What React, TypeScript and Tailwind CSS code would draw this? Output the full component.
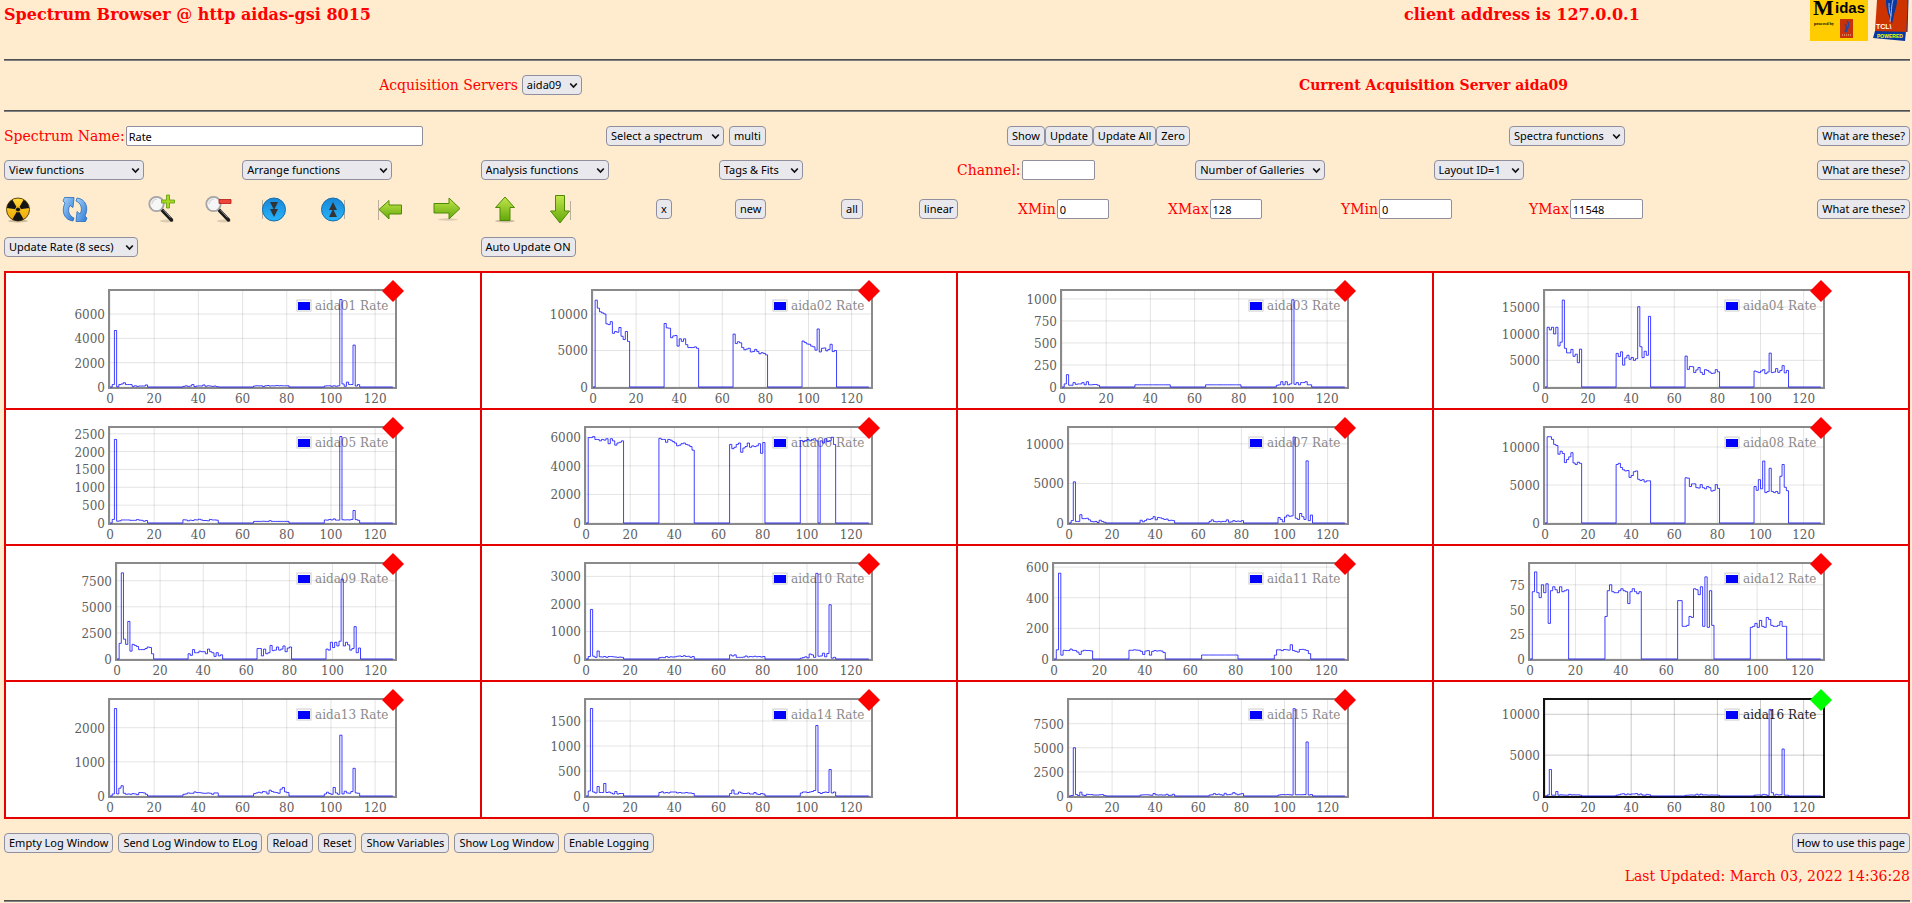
import type { ReactNode } from "react";

type Gallery = {
  name: string;
  left: number;
  height: number;
  max: number;
  ticks: number[];
  // counts for the four groups of 16 channels, starting at 1, 33, 65 and 97
  groups: number[][];
  active?: boolean;
};

const flat = (value: number) => Array.from({ length: 16 }, () => value);

const galleries: Gallery[] = [
  {
    name: "aida01", left: 47, height: 135, max: 7900, ticks: [0, 2000, 4000, 6000],
    groups: [
      [200, 4650, 20, 200, 250, 350, 200, 200, 200, 50, 100, 50, 80, 80, 80, 170],
      [50, 100, 50, 80, 200, 30, 80, 90, 80, 170, 60, 100, 80, 50, 80, 30],
      [80, 100, 90, 100, 40, 100, 120, 80, 100, 90, 120, 100, 110, 100, 100, 100],
      [80, 100, 100, 60, 100, 60, 100, 7200, 250, 60, 400, 200, 200, 3450, 80, 200],
    ],
  },
  {
    name: "aida02", left: 54, height: 135, max: 13150, ticks: [0, 5000, 10000],
    groups: [
      [11900, 10800, 10300, 10150, 10000, 8650, 8550, 8950, 7350, 7600, 7500, 8150, 6950, 6500, 7600, 6250],
      [8700, 8100, 8050, 6750, 7000, 7050, 5600, 6600, 6250, 6600, 5800, 5400, 5400, 5400, 5500, 5300],
      [7250, 5950, 6200, 6050, 5400, 5100, 5200, 5300, 4800, 4850, 5150, 4850, 4550, 4700, 4600, 4400],
      [6300, 6100, 5900, 5850, 5600, 5500, 5050, 7950, 4800, 5300, 5350, 4950, 5150, 5850, 4850, 5000],
    ],
  },
  {
    name: "aida03", left: 47, height: 135, max: 1090, ticks: [0, 250, 500, 750, 1000],
    groups: [
      [35, 140, 20, 20, 50, 30, 35, 35, 50, 25, 60, 25, 25, 28, 28, 20],
      flat(25),
      flat(25),
      [20, 25, 60, 25, 60, 25, 35, 990, 30, 50, 25, 50, 50, 60, 25, 25],
    ],
  },
  {
    name: "aida04", left: 54, height: 135, max: 18000, ticks: [0, 5000, 10000, 15000],
    groups: [
      [11200, 10700, 11200, 9950, 11200, 7700, 8400, 16300, 7250, 6400, 6400, 7050, 5750, 6150, 4550, 7100],
      [6300, 5700, 6600, 4100, 5450, 5950, 5200, 5550, 5000, 5300, 15050, 7550, 5500, 6700, 5950, 13250],
      [5800, 3300, 3850, 3800, 2700, 3200, 3650, 2750, 2350, 3250, 3100, 2800, 2550, 2600, 3250, 2850],
      [3000, 2850, 2700, 3000, 3250, 2500, 2800, 6350, 2700, 2800, 3450, 2750, 3100, 4000, 2650, 3100],
    ],
  },
  {
    name: "aida05", left: 47, height: 134, max: 2660, ticks: [0, 500, 1000, 1500, 2000, 2500],
    groups: [
      [100, 2340, 50, 60, 85, 85, 85, 85, 75, 75, 75, 95, 80, 75, 50, 70],
      [90, 85, 60, 80, 70, 90, 85, 105, 85, 70, 70, 60, 100, 85, 85, 80],
      [45, 45, 45, 45, 50, 45, 45, 65, 45, 45, 45, 45, 45, 45, 45, 45],
      [85, 80, 100, 85, 115, 80, 80, 2420, 90, 85, 90, 85, 100, 350, 95, 75],
    ],
  },
  {
    name: "aida06", left: 47, height: 134, max: 6650, ticks: [0, 2000, 4000, 6000],
    groups: [
      [5980, 5980, 6050, 5850, 5850, 5750, 5850, 5800, 5900, 5550, 5900, 5750, 5450, 5600, 5650, 5750],
      [5930, 5850, 5850, 5650, 5850, 5800, 5700, 5600, 5400, 5450, 5550, 5600, 5500, 5450, 5350, 5100],
      [5500, 5200, 5300, 5500, 5600, 4950, 5250, 5350, 5600, 5300, 5400, 5350, 5400, 5550, 4880, 5630],
      [5780, 5700, 5750, 5850, 5750, 5850, 5900, 5750, 0, 5750, 5600, 5900, 5700, 5750, 6000, 5500],
    ],
  },
  {
    name: "aida07", left: 54, height: 134, max: 12000, ticks: [0, 5000, 10000],
    groups: [
      [300, 5200, 200, 200, 1050, 550, 550, 600, 400, 200, 150, 200, 60, 350, 200, 100],
      [350, 150, 300, 500, 450, 550, 800, 400, 700, 650, 550, 450, 500, 300, 350, 300],
      [200, 400, 200, 150, 200, 150, 200, 200, 400, 100, 150, 300, 200, 250, 200, 300],
      [700, 450, 150, 750, 1000, 850, 900, 10850, 600, 450, 1200, 800, 450, 7850, 300, 1000],
    ],
  },
  {
    name: "aida08", left: 54, height: 134, max: 12500, ticks: [0, 5000, 10000],
    groups: [
      [11350, 11350, 11000, 10350, 10200, 9050, 9450, 9150, 7950, 8350, 8700, 9250, 7900, 7700, 8000, 7850],
      [7700, 7850, 7300, 7000, 6850, 6900, 6000, 6250, 6750, 6850, 5750, 5600, 5700, 5400, 5550, 5550],
      [5950, 5900, 4800, 5150, 5150, 4650, 4600, 5050, 4650, 4500, 4800, 4650, 4200, 4300, 5050, 4550],
      [4800, 4300, 5700, 4500, 8150, 4000, 4150, 7200, 4150, 4000, 4150, 3900, 6150, 7700, 4700, 4250],
    ],
  },
  {
    name: "aida09", left: 54, height: 134, max: 9100, ticks: [0, 2500, 5000, 7500],
    groups: [
      [1500, 8250, 1900, 1400, 3600, 750, 1400, 1300, 1200, 900, 900, 900, 1000, 1150, 1100, 500],
      [500, 350, 900, 600, 600, 750, 700, 700, 500, 950, 700, 600, 250, 600, 300, 400],
      [1000, 1000, 300, 950, 500, 600, 1300, 800, 850, 1150, 850, 950, 1250, 700, 1050, 1150],
      [950, 850, 1600, 1100, 1600, 1250, 1700, 7650, 1250, 1600, 1350, 850, 1000, 3100, 600, 1050],
    ],
  },
  {
    name: "aida10", left: 47, height: 134, max: 3450, ticks: [0, 1000, 2000, 3000],
    groups: [
      [90, 1800, 100, 60, 290, 80, 70, 90, 60, 90, 90, 80, 70, 60, 70, 60],
      [50, 60, 50, 90, 60, 80, 70, 80, 100, 110, 90, 120, 90, 100, 60, 90],
      [150, 110, 150, 60, 60, 60, 70, 110, 70, 90, 80, 100, 80, 90, 70, 90],
      [30, 50, 80, 40, 180, 150, 60, 3110, 100, 110, 210, 80, 200, 1970, 30, 60],
    ],
  },
  {
    name: "aida11", left: 39, height: 134, max: 620, ticks: [0, 200, 400, 600],
    groups: [
      [60, 560, 25, 57, 55, 55, 65, 57, 55, 45, 30, 52, 57, 55, 55, 53],
      [57, 57, 60, 58, 57, 50, 30, 52, 55, 25, 50, 55, 52, 54, 52, 42],
      flat(26),
      [25, 60, 60, 55, 62, 60, 58, 93, 55, 50, 45, 62, 63, 60, 55, 35],
    ],
  },
  {
    name: "aida12", left: 39, height: 134, max: 96, ticks: [0, 25, 50, 75],
    groups: [
      [68, 88, 67, 62, 75, 67, 76, 36, 69, 73, 70, 67, 73, 68, 69, 70],
      [43, 69, 75, 68, 67, 67, 69, 71, 69, 68, 56, 68, 71, 68, 66, 68],
      [59, 59, 33, 33, 34, 43, 42, 71, 70, 65, 73, 33, 83, 32, 69, 34],
      [32, 33, 36, 32, 39, 33, 32, 42, 40, 34, 33, 33, 34, 38, 33, 33],
    ],
  },
  {
    name: "aida13", left: 47, height: 135, max: 2810, ticks: [0, 1000, 2000],
    groups: [
      [60, 2560, 60, 230, 300, 80, 50, 60, 50, 70, 60, 40, 100, 100, 90, 50],
      [50, 60, 90, 80, 80, 120, 100, 100, 90, 80, 80, 90, 80, 50, 90, 90],
      [70, 90, 110, 90, 130, 120, 60, 170, 130, 110, 100, 80, 200, 250, 120, 100],
      [60, 110, 70, 50, 250, 90, 50, 1780, 60, 140, 90, 80, 130, 810, 90, 80],
    ],
  },
  {
    name: "aida14", left: 47, height: 135, max: 1920, ticks: [0, 500, 1000, 1500],
    groups: [
      [100, 1750, 80, 60, 190, 70, 70, 250, 70, 80, 60, 40, 90, 40, 50, 50],
      [70, 85, 60, 70, 60, 80, 80, 80, 60, 70, 60, 60, 70, 60, 60, 50],
      [50, 120, 40, 40, 80, 60, 50, 50, 60, 40, 40, 70, 40, 30, 50, 40],
      [60, 80, 80, 70, 80, 90, 110, 1410, 70, 50, 70, 80, 70, 530, 60, 80],
    ],
  },
  {
    name: "aida15", left: 54, height: 135, max: 9950, ticks: [0, 2500, 5000, 7500],
    groups: [
      [50, 5000, 150, 50, 400, 100, 50, 180, 150, 150, 100, 100, 100, 130, 150, 60],
      [100, 120, 130, 130, 100, 80, 260, 130, 100, 120, 100, 100, 180, 60, 80, 180],
      [100, 130, 250, 150, 200, 130, 80, 280, 130, 150, 200, 350, 220, 130, 200, 250],
      [100, 130, 150, 130, 150, 130, 100, 9050, 130, 140, 130, 140, 150, 5600, 100, 150],
    ],
  },
  {
    name: "aida16", left: 54, height: 135, max: 11750, ticks: [0, 5000, 10000], active: true,
    groups: [
      [130, 3250, 100, 100, 550, 100, 150, 120, 110, 100, 200, 130, 150, 130, 150, 100],
      [100, 150, 250, 280, 150, 250, 200, 250, 250, 300, 150, 250, 120, 100, 200, 150],
      [80, 100, 120, 130, 100, 220, 120, 230, 130, 140, 120, 110, 130, 110, 120, 100],
      [100, 120, 130, 100, 200, 150, 80, 10600, 400, 100, 200, 130, 150, 5750, 100, 100],
    ],
  },
];

const RIGHT = 332;
const TOP = 18;
const xTicks = [0, 20, 40, 60, 80, 100, 120];

function Plot({ name, left, height, max, ticks, groups, active }: Gallery) {
  const base = height - 21;
  const x = (channel: number) => left + (channel * (RIGHT - left)) / 129;
  const y = (count: number) => base - (count * (base - TOP)) / max;

  let path = `M${x(0)} ${y(0)}`;
  groups.forEach((group, g) => {
    const first = 1 + g * 32;
    path += `H${x(first)}`;
    group.forEach((count, i) => {
      path += `V${y(count)}H${x(first + i + 1)}`;
    });
    path += `V${y(0)}`;
  });
  path += `H${x(128)}`;

  return (
    <svg
      width={360}
      height={height}
      className="mx-auto block font-['DejaVu_Serif',serif] text-xs"
      role="img"
      aria-label={`${name} Rate`}
    >
      <g stroke="#545454" strokeOpacity={active ? 0.3 : 0.16}>
        {xTicks.map((t) => (
          <line key={t} x1={x(t)} x2={x(t)} y1={TOP} y2={base} />
        ))}
        {ticks.map((t) => (
          <line key={t} x1={left} x2={RIGHT} y1={y(t)} y2={y(t)} />
        ))}
      </g>
      <rect
        x={left - 1}
        y={17}
        width={RIGHT + 2 - left}
        height={base - 16}
        fill="none"
        stroke={active ? "#111" : "#8a8a8a"}
        strokeWidth={2}
      />
      <g fill="#606060">
        {xTicks.map((t) => (
          <text key={t} x={x(t)} y={height - 5} textAnchor="middle">
            {t}
          </text>
        ))}
        {ticks.map((t) => (
          <text key={t} x={left - 5} y={y(t) + 5} textAnchor="end">
            {t}
          </text>
        ))}
      </g>
      <rect x={234} y={27} width={14} height={11} fill="#fff" stroke="#ccc" />
      <rect x={235} y={29} width={12} height={8} fill="#00f" />
      <text x={252} y={37} fill={active ? "#222" : "#8a8a8a"}>
        {name} Rate
      </text>
      <path d={path} fill="none" stroke="#00f" strokeOpacity={0.75} />
      <path d="M330 7 341 18 330 29 319 18Z" fill={active ? "#0f0" : "#f00"} />
    </svg>
  );
}

function Btn({ children }: { children: ReactNode }) {
  return (
    <button
      type="button"
      className="h-5 whitespace-nowrap rounded border border-[#8f8f9d] bg-[#e9e9ed] px-1 font-['Noto_Sans',sans-serif] text-[11px] leading-4 text-black"
    >
      {children}
    </button>
  );
}

function Select({ label, width, id }: { label: string; width: string; id?: string }) {
  return (
    <span className={`relative inline-block h-5 ${width}`}>
      <select
        id={id}
        aria-label={id ? undefined : label}
        className="block h-5 w-full appearance-none rounded border border-[#8f8f9d] bg-[#e9e9ed] pl-1 font-['Noto_Sans',sans-serif] text-[11px] leading-4 text-black"
      >
        <option>{label}</option>
      </select>
      <svg
        className="pointer-events-none absolute right-1 top-[7px]"
        width="9"
        height="7"
        fill="none"
        stroke="#111"
        strokeWidth="1.7"
      >
        <path d="M1.2 1.5 4.5 5 7.8 1.5" />
      </svg>
    </span>
  );
}

function Field({ label, value, width }: { label: string; value: string; width: string }) {
  return (
    <label className="flex items-center gap-px whitespace-nowrap">
      {label}
      <input
        type="text"
        defaultValue={value}
        className={`h-5 rounded-xs border border-[#8f8f9d] bg-white px-0.5 font-['Noto_Sans',sans-serif] text-[11px] leading-4 text-black ${width}`}
      />
    </label>
  );
}

const Rule = () => <hr className="h-0.5 border-b border-t border-b-[#808080] border-t-[#505050]" />;

function IconButton({ label, children }: { label: string; children: ReactNode }) {
  return (
    <button type="button" aria-label={label} className="block h-8 w-7">
      <svg width="28" height="32" viewBox="0 0 28 32">
        {children}
      </svg>
    </button>
  );
}

function Magnifier({ children }: { children: ReactNode }) {
  return (
    <>
      <ellipse cx="20" cy="28" rx="7" ry="1.5" fill="#0002" />
      <path d="M15 17 24.500 27" stroke="#1c1c1c" strokeWidth="3.500" strokeLinecap="round" />
      <path d="M16.500 17 23.500 24.500" stroke="#999" strokeWidth="1" />
      <circle cx="9.5" cy="11" r="7.2" fill="#f6f6f6" stroke="#a4a4a4" strokeWidth="1.800" />
      <path d="M5 11a5 5 0 0 1 5-5" stroke="#d8d8d8" strokeWidth="1.500" fill="none" />
      {children}
    </>
  );
}

function Disc({ up }: { up?: boolean }) {
  return (
    <>
      <path d={up ? "M25.500 7v19" : "M2.500 7v19"} stroke="#a89f90" strokeOpacity=".8" />
      <circle cx="14" cy="16.500" r="11.500" fill="url(#disc)" stroke="#176fae" />
      <g fill="#333" transform={up ? "rotate(180 14 16.5)" : undefined}>
        <path d="M10 9h8l-4 8zM10 16h8l-4 8z" />
      </g>
    </>
  );
}

function Toolbar() {
  return (
    <>
      <svg width="0" height="0" className="absolute" aria-hidden="true">
        <defs>
          <linearGradient id="disc" x1="0" y1="0" x2="0" y2="1">
            <stop offset="0" stopColor="#1787d8" />
            <stop offset="1" stopColor="#27b4fa" />
          </linearGradient>
          <linearGradient id="green" x1="0" y1="0" x2="0" y2="1">
            <stop offset="0" stopColor="#c3e64a" />
            <stop offset="1" stopColor="#62a80a" />
          </linearGradient>
          <linearGradient id="yellow" x1="0" y1="0" x2="0" y2="1">
            <stop offset="0" stopColor="#ffd83a" />
            <stop offset="1" stopColor="#f0a800" />
          </linearGradient>
          <linearGradient id="blue" x1="0" y1="0" x2="1" y2="1">
            <stop offset="0" stopColor="#a8d4fa" />
            <stop offset="1" stopColor="#2a78d8" />
          </linearGradient>
        </defs>
      </svg>
      <IconButton label="Radiation">
        <ellipse cx="14" cy="28" rx="10" ry="1.5" fill="#0003" />
        <circle cx="14" cy="16.500" r="11.500" fill="url(#yellow)" stroke="#5c4a10" />
        <path d="M14 16.500 2.800 15A11.300 11.300 0 0 1 8.400 6.700ZM14 16.500 19.600 6.700A11.300 11.300 0 0 1 25.200 15ZM14 16.500 19.600 26.300A11.300 11.300 0 0 1 8.400 26.300Z" fill="#151515" />
        <circle cx="14" cy="16.500" r="2.500" fill="#151515" stroke="#f7bd10" />
      </IconButton>
      <IconButton label="Refresh">
        <g fill="url(#blue)" stroke="#2a6cb8" strokeWidth=".8">
          <path d="M12 28C3 27 0 18 4 10L2 8 3.500 4.500H13L12 14.500 9 12.500C6 17 8 23 13 25Z" />
          <path d="M16 5c9 1 12 10 8 18l2 2-1.500 3.500H15L16 18.500l3 2.500C22 16 20 10 15 8Z" />
        </g>
      </IconButton>
      <IconButton label="Zoom in">
        <Magnifier>
          <path d="M19.500 2h3v5h5v3h-5v5h-3v-5h-5V7h5Z" fill="#a8d820" stroke="#5d9a10" strokeWidth=".8" />
        </Magnifier>
      </IconButton>
      <IconButton label="Zoom out">
        <Magnifier>
          <path d="M15 6.500h12v4H15Z" fill="#f04438" stroke="#b01818" strokeWidth=".8" />
        </Magnifier>
      </IconButton>
      <IconButton label="Compress">
        <Disc />
      </IconButton>
      <IconButton label="Expand">
        <Disc up />
      </IconButton>
      <IconButton label="Left">
        <path d="M1.500 7v20" stroke="#a89f90" strokeOpacity=".8" />
        <path d="M2 16.500 12 7.500v4.500h12.500v9H12v5Z" fill="url(#green)" stroke="#4e8a08" />
      </IconButton>
      <IconButton label="Right">
        <ellipse cx="15" cy="26.500" rx="10" ry="1.200" fill="#0002" />
        <path d="M27 15.500 16 5v5.500H1v9.500h15v6Z" fill="url(#green)" stroke="#4e8a08" />
      </IconButton>
      <IconButton label="Up">
        <ellipse cx="14" cy="28" rx="10" ry="1.500" fill="#0003" />
        <path d="M14 4 4.500 14.500H9v13h10v-13h4.500Z" fill="url(#green)" stroke="#4e8a08" />
      </IconButton>
      <IconButton label="Down">
        <path d="M24.500 8v19" stroke="#a89f90" strokeOpacity=".8" />
        <path d="M14 30 4.500 18H9.500V2.500h9V18h5Z" fill="url(#green)" stroke="#4e8a08" />
      </IconButton>
    </>
  );
}

function MidasLogo() {
  return (
    <svg width="58" height="41" viewBox="0 0 58 41" role="img" aria-label="Midas">
      <rect width="58" height="41" fill="#fc0" />
      <text x="3" y="15" fontFamily="Liberation Serif, serif" fontWeight="700" fontSize="22">
        M
      </text>
      <text x="25" y="13" fontFamily="Liberation Sans, sans-serif" fontWeight="700" fontSize="15">
        idas
      </text>
      <text x="4" y="25" fontFamily="Liberation Serif, serif" fontWeight="700" fontSize="4">
        powered by
      </text>
      <rect x="30" y="19" width="13" height="19" fill="#c8320a" />
      <path d="M37 21c3 2 1 8-1 11M35 24c2 2 1 6 0 8" stroke="#2648a0" strokeWidth="1.5" fill="none" />
      <path d="M32 35h9" stroke="#f0c8a0" strokeDasharray="1 1" />
    </svg>
  );
}

function TclLogo() {
  return (
    <svg width="36" height="41" viewBox="0 0 36 41" role="img" aria-label="TCL powered">
      <path d="M2 31 33 31 32 41 0 38Z" fill="#0838a0" />
      <path d="M4 0h31l-1 32-32-1Z" fill="#cc3300" />
      <path d="M35 0 34 32" stroke="#0838a0" strokeWidth="1" />
      <path d="M13 0h11c0 7-2 10-3 15l-2 9-3-8c-2-6-3-9-3-16" fill="#0838a0" />
      <path d="M20 0c-2 6-1 12-3 22M16 3c0 5 0 9 2 13" stroke="#9ab8e8" fill="none" />
      <text x="3" y="29" fill="#fff" fontFamily="Liberation Sans, sans-serif" fontWeight="700" fontSize="7">
        TCL\
      </text>
      <text x="4" y="38" fill="#ff0" fontFamily="Liberation Sans, sans-serif" fontWeight="700" fontSize="5">
        POWERED
      </text>
    </svg>
  );
}

const logButtons = [
  "Empty Log Window",
  "Send Log Window to ELog",
  "Reload",
  "Reset",
  "Show Variables",
  "Show Log Window",
  "Enable Logging",
];

export default function App() {
  const rows = [0, 4, 8, 12].map((start) => galleries.slice(start, start + 4));

  return (
    <div className="min-h-screen bg-[#ffebcd] pl-1 pr-0.5 font-['DejaVu_Serif',serif] text-sm text-[#f00]">
      <header className="grid h-[59px] grid-cols-[1400fr_406fr_100fr] text-base font-bold">
        <h1 className="pt-[3px]">Spectrum Browser @ http aidas-gsi 8015</h1>
        <p className="pt-[3px]">client address is 127.0.0.1</p>
        <div className="flex items-start gap-[5px]">
          <MidasLogo />
          <TclLogo />
        </div>
      </header>
      <Rule />

      <div className="grid h-[49px] grid-cols-2 items-center justify-items-center pb-0.5">
        <div className="flex items-center gap-1">
          <label htmlFor="server">Acquisition Servers</label>
          <Select id="server" label="aida09" width="w-15" />
        </div>
        <strong>Current Acquisition Server aida09</strong>
      </div>
      <Rule />

      <div className="mt-3.5 grid grid-cols-[602fr_401fr_502fr_401fr] items-center">
        <Field label="Spectrum Name:" value="Rate" width="w-[297px]" />
        <div className="flex gap-[5px]">
          <Select label="Select a spectrum" width="w-[118px]" />
          <Btn>multi</Btn>
        </div>
        <div className="flex">
          <Btn>Show</Btn>
          <Btn>Update</Btn>
          <Btn>Update All</Btn>
          <Btn>Zero</Btn>
        </div>
        <div className="flex justify-between">
          <Select label="Spectra functions" width="w-[116px]" />
          <Btn>What are these?</Btn>
        </div>
      </div>

      <div className="mt-3.5 grid grid-cols-8 items-center">
        <Select label="View functions" width="w-[140px]" />
        <Select label="Arrange functions" width="w-[150px]" />
        <Select label="Analysis functions" width="w-[128px]" />
        <Select label="Tags & Fits" width="w-[84px]" />
        <Field label="Channel:" value="" width="w-[73px]" />
        <Select label="Number of Galleries" width="w-[130px]" />
        <Select label="Layout ID=1" width="w-[90px]" />
        <div className="flex justify-end">
          <Btn>What are these?</Btn>
        </div>
      </div>

      <div className="mb-3 mt-[13px] grid grid-cols-[57fr_86fr_57fr_56fr_59fr_58fr_56fr_58fr_55fr_110fr_79fr_106fr_78fr_99fr_150fr_173fr_188fr_381fr] items-center justify-items-start">
        <Toolbar />
        <Btn>x</Btn>
        <Btn>new</Btn>
        <Btn>all</Btn>
        <Btn>linear</Btn>
        <Field label="XMin" value="0" width="w-13" />
        <Field label="XMax" value="128" width="w-13" />
        <Field label="YMin" value="0" width="w-[73px]" />
        <div className="flex w-full justify-between">
          <Field label="YMax" value="11548" width="w-[73px]" />
          <Btn>What are these?</Btn>
        </div>
      </div>

      <div className="grid grid-cols-4">
        <Select label="Update Rate (8 secs)" width="w-[134px]" />
        <div className="flex">
          <Btn>Auto Update ON</Btn>
        </div>
      </div>

      <table className="mt-3.5 w-full table-fixed border-collapse bg-white">
        <tbody>
          {rows.map((row, r) => (
            <tr key={r}>
              {row.map((gallery) => (
                <td key={gallery.name} className="border-2 border-[#e60000] p-0">
                  <Plot {...gallery} />
                </td>
              ))}
            </tr>
          ))}
        </tbody>
      </table>

      <div className="mt-3.5 flex justify-between">
        <div className="flex gap-[5px]">
          {logButtons.map((label) => (
            <Btn key={label}>{label}</Btn>
          ))}
        </div>
        <Btn>How to use this page</Btn>
      </div>
      <p className="mb-3.5 mt-[13px] text-right">Last Updated: March 03, 2022 14:36:28</p>
      <Rule />
    </div>
  );
}
